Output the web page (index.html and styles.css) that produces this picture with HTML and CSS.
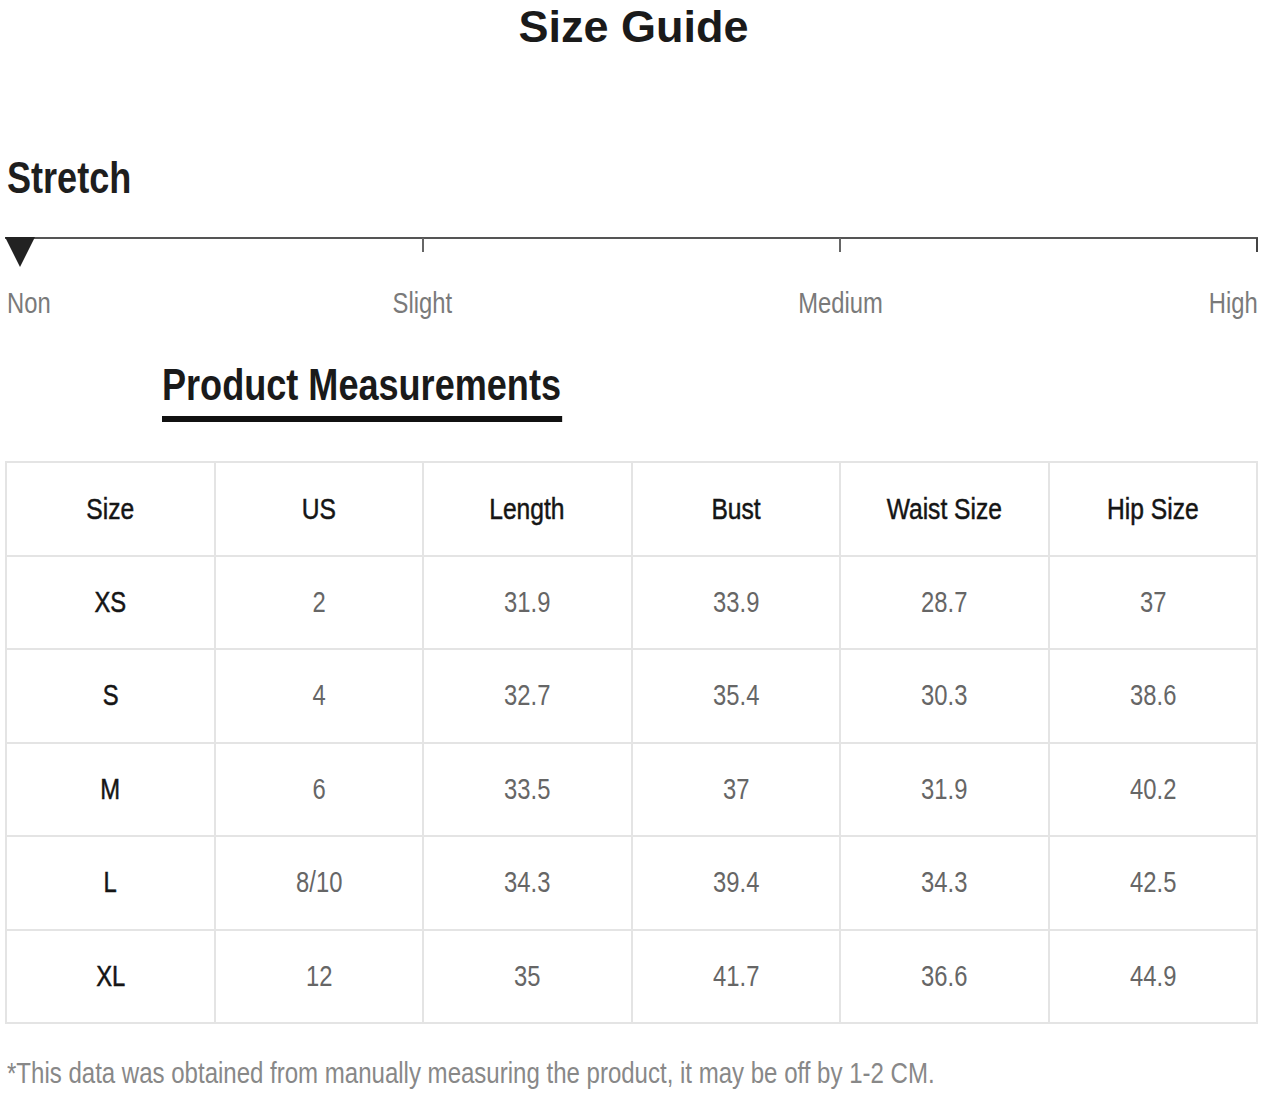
FILE: index.html
```html
<!DOCTYPE html>
<html>
<head>
<meta charset="utf-8">
<link rel="stylesheet" href="styles.css">
</head>
<body>
<div class="page">
  <h1 class="title">Size Guide</h1>
  <h2 class="stretch"><span class="nl">Stretch</span></h2>
  <div class="scale">
    <svg class="scale-svg" width="1267" height="34" viewBox="0 0 1267 34">
      <line x1="5" y1="2" x2="1258" y2="2" stroke="#555" stroke-width="2"/>
      <line x1="423" y1="2" x2="423" y2="16" stroke="#666" stroke-width="2"/>
      <line x1="840" y1="2" x2="840" y2="16" stroke="#666" stroke-width="2"/>
      <line x1="1257" y1="2" x2="1257" y2="16" stroke="#444" stroke-width="2"/>
      <polygon points="5,1 35,1 20,31" fill="#222"/>
    </svg>
    <div class="labels">
      <div class="mark first"><span class="nl">Non</span></div>
      <div class="mark"><span class="nc">Slight</span></div>
      <div class="mark"><span class="nc">Medium</span></div>
      <div class="mark last"><span class="nr">High</span></div>
    </div>
  </div>
  <div class="pm-wrap"><h2 class="pm">Product Measurements</h2></div>
  <table class="sizes">
    <thead>
      <tr><th><span>Size</span></th><th><span>US</span></th><th><span>Length</span></th><th><span>Bust</span></th><th><span>Waist Size</span></th><th><span>Hip Size</span></th></tr>
    </thead>
    <tbody>
      <tr><th><span>XS</span></th><td><span>2</span></td><td><span>31.9</span></td><td><span>33.9</span></td><td><span>28.7</span></td><td><span>37</span></td></tr>
      <tr><th><span>S</span></th><td><span>4</span></td><td><span>32.7</span></td><td><span>35.4</span></td><td><span>30.3</span></td><td><span>38.6</span></td></tr>
      <tr><th><span>M</span></th><td><span>6</span></td><td><span>33.5</span></td><td><span>37</span></td><td><span>31.9</span></td><td><span>40.2</span></td></tr>
      <tr><th><span>L</span></th><td><span>8/10</span></td><td><span>34.3</span></td><td><span>39.4</span></td><td><span>34.3</span></td><td><span>42.5</span></td></tr>
      <tr><th><span>XL</span></th><td><span>12</span></td><td><span>35</span></td><td><span>41.7</span></td><td><span>36.6</span></td><td><span>44.9</span></td></tr>
    </tbody>
  </table>
  <p class="note"><span class="nl">*This data was obtained from manually measuring the product, it may be off by 1-2 CM.</span></p>
</div>
</body>
</html>
```
FILE: styles.css
```css
html, body {
  margin: 0;
  padding: 0;
  background: #fff;
}
.page {
  width: 1267px;
  font-family: "Liberation Sans", Arial, sans-serif;
}
.nl, .nc, .nr, .sizes span {
  display: inline-block;
  white-space: nowrap;
  transform: scaleX(0.82);
}
.nl { transform-origin: left center; }
.nc, .sizes span { transform-origin: center center; }
.nr { transform-origin: right center; }
.title {
  margin: 2px 0 0 0;
  font-weight: bold;
  font-size: 45px;
  line-height: 50px;
  text-align: center;
  color: #1a1a1a;
}
.stretch {
  margin: 101px 0 0 7px;
  font-size: 44px;
  line-height: 50px;
  font-weight: bold;
  color: #1e1e1e;
}
.scale {
  margin-top: 33px;
}
.scale-svg {
  display: block;
}
.labels {
  display: flex;
  justify-content: space-between;
  width: 1253px;
  margin: 16px 0 0 5px;
  font-size: 29px;
  line-height: 34px;
  color: #7a7a7a;
}
.mark {
  width: 0;
  display: flex;
  justify-content: center;
  white-space: nowrap;
}
.mark.first {
  justify-content: flex-start;
}
.mark.first span {
  margin-left: 2px;
}
.mark.last {
  justify-content: flex-end;
}
.pm-wrap {
  margin: 43px 0 0 162px;
}
.pm {
  display: inline-block;
  margin: 0;
  font-size: 44px;
  line-height: 44px;
  font-weight: bold;
  color: #1a1a1a;
  padding: 0 1px 9px 0;
  border-bottom: 6px solid #111;
  transform: scaleX(0.82);
  transform-origin: left center;
}
.sizes {
  margin: 39px 0 0 5px;
  width: 1253px;
  border-collapse: collapse;
  table-layout: fixed;
}
.sizes th, .sizes td {
  border: 2px solid #e4e4e4;
  height: 91.5px;
  padding: 0;
  text-align: center;
  vertical-align: middle;
  font-size: 29px;
}
.sizes th {
  font-weight: normal;
  color: #151515;
  -webkit-text-stroke: 0.5px #151515;
}
.sizes thead th {
  font-size: 30px;
}
.sizes td {
  color: #666;
}
.note {
  margin: 32px 0 0 7px;
  font-size: 29.3px;
  line-height: 34px;
  color: #888;
}
```
